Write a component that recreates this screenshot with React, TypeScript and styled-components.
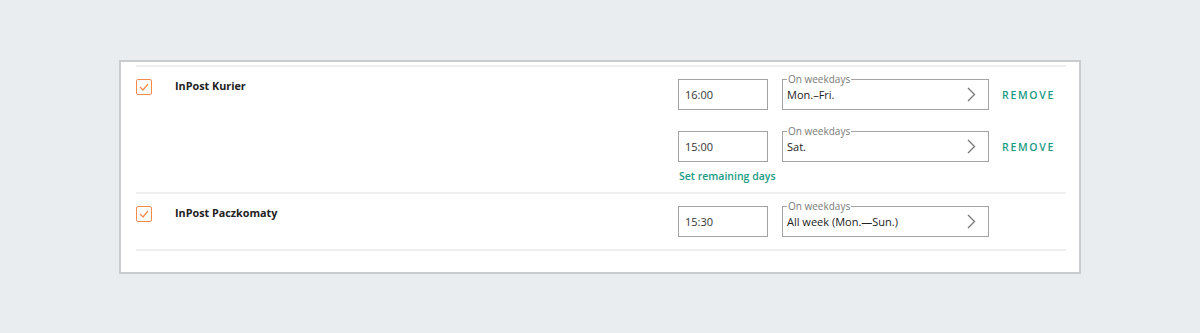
import React from "react";
import styled, { createGlobalStyle } from "styled-components";

const GlobalStyle = createGlobalStyle`
	body {
		margin: 0;
		background-color: #e9edf0;
		font-family: "Open Sans", "Noto Sans", sans-serif;
		color: #222;
	}
`;

const Page = styled.main`
	height: 333px;
	padding: 60px 0 0 119px;
	box-sizing: border-box;
`;

const Card = styled.section`
	width: 962px;
	box-sizing: border-box;
	background-color: #fff;
	border: 2px solid #c9ccce;
	padding: 3px 13px 21px 15px;
`;

const Row = styled.div`
	display: grid;
	grid-template-columns: 40px 1fr 388px;
	border-top: 2px solid #efefef;
	padding: 12px 0 11px;

	&:last-child {
		border-bottom: 2px solid #efefef;
		padding-bottom: 12px;
	}
`;

const Check = styled.span`
	width: 16px;
	height: 16px;
	box-sizing: border-box;
	border: 1.5px solid #f58a4b;
	border-radius: 2px;
	display: flex;
	align-items: center;
	justify-content: center;
`;

const Name = styled.div`
	font-size: 10.8px;
	font-weight: 700;
	color: #222;
	line-height: 14px;
	margin-left: -1px;
`;

const Controls = styled.div`
	display: flex;
	flex-direction: column;
	gap: 21px;
`;

const Line = styled.div`
	display: flex;
	align-items: center;
`;

const TimeBox = styled.div`
	width: 90px;
	height: 31px;
	box-sizing: border-box;
	border: 1px solid #a3a3a3;
	display: flex;
	align-items: center;
	padding-left: 6px;
	font-size: 11px;
	color: #333;
	margin-right: 14px;
`;

const DaySelect = styled.div`
	position: relative;
	width: 207px;
	height: 31px;
	box-sizing: border-box;
	border: 1px solid #a3a3a3;
	display: flex;
	align-items: center;
	justify-content: space-between;
	padding: 0 12px 0 4px;
	font-size: 11px;
	color: #222;
	margin-right: 13px;
`;

const Legend = styled.span`
	position: absolute;
	top: -7px;
	left: 4px;
	padding: 0 1px;
	background-color: #fff;
	font-size: 10px;
	line-height: 12px;
	color: #7a7a7a;
`;

const Remove = styled.button`
	background: none;
	border: none;
	padding: 0;
	font-family: inherit;
	font-size: 10.5px;
	font-weight: 600;
	letter-spacing: 1.7px;
	color: #1a9a85;
	cursor: pointer;
`;

const Remaining = styled.a`
	font-size: 10.5px;
	font-weight: 600;
	color: #1a9a85;
	margin: -14px 0 -2px;
	padding-left: 1px;
	line-height: 14px;
`;

const Chevron = () => (
	<svg width="9" height="15" viewBox="0 0 9 15">
		<path d="M1 1l6.5 6.5L1 14" fill="none" stroke="#777" strokeWidth="1.3" />
	</svg>
);

const Tick = () => (
	<svg width="10" height="8" viewBox="0 0 10 8">
		<path d="M1 4l3 3 5-6" fill="none" stroke="#f58a4b" strokeWidth="1.2" />
	</svg>
);

interface Slot {
	time: string;
	days: string;
	removable: boolean;
}

interface Carrier {
	name: string;
	slots: Slot[];
	remaining: boolean;
}

const carriers: Carrier[] = [
	{
		name: "InPost Kurier",
		slots: [
			{ time: "16:00", days: "Mon.–Fri.", removable: true },
			{ time: "15:00", days: "Sat.", removable: true },
		],
		remaining: true,
	},
	{
		name: "InPost Paczkomaty",
		slots: [{ time: "15:30", days: "All week (Mon.—Sun.)", removable: false }],
		remaining: false,
	},
];

const App = () => {
	return (
		<Page>
			<GlobalStyle />
			<Card>
				{carriers.map((c) => (
					<Row key={c.name}>
						<div>
							<Check>
								<Tick />
							</Check>
						</div>
						<Name>{c.name}</Name>
						<Controls>
							{c.slots.map((s) => (
								<Line key={s.time}>
									<TimeBox>{s.time}</TimeBox>
									<DaySelect>
										<Legend>On weekdays</Legend>
										<span>{s.days}</span>
										<Chevron />
									</DaySelect>
									{s.removable && <Remove>REMOVE</Remove>}
								</Line>
							))}
							{c.remaining && <Remaining>Set remaining days</Remaining>}
						</Controls>
					</Row>
				))}
			</Card>
		</Page>
	);
};

export default App;
